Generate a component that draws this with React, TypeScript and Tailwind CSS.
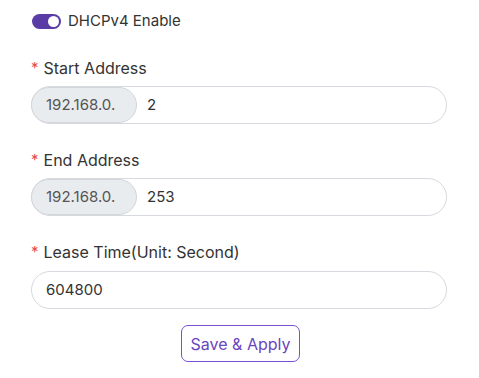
import React from 'react';

const Label: React.FC<{ text: string }> = ({ text }) => (
  <div className="flex items-center h-[22px] text-[16px] text-[#333]">
    <span className="text-[#e5484d] mr-[5px] text-[15px]">*</span>
    {text}
  </div>
);

const AddonInput: React.FC<{ prefix: string; value: string }> = ({ prefix, value }) => (
  <div className="flex items-center h-[38px] w-[416px] rounded-full border border-[#d6d9de] bg-white">
    <div className="flex items-center h-full w-[106px] -ml-px pl-[14px] rounded-full border border-[#d3d6db] bg-[#e9ecef] text-[#555] text-[15px]">
      {prefix}
    </div>
    <span className="pl-[10px] text-[15px] text-[#333]">{value}</span>
  </div>
);

export default function App() {
  return (
    <div className="w-[479px] h-[378px] bg-white px-[31px] pt-[13px]" style={{ fontFamily: 'Inter, "Noto Sans", sans-serif' }}>
      {/* Enable switch */}
      <div className="flex items-center gap-[7px] h-[17px]">
        <div className="flex items-center justify-end w-[29px] h-[15px] ml-px rounded-full bg-[#5a3ca6] pr-[2px]">
          <div className="w-[11px] h-[11px] rounded-full bg-white" />
        </div>
        <span className="text-[15px] text-[#333]">DHCPv4 Enable</span>
      </div>

      <div className="mt-[27px]">
        <Label text="Start Address" />
        <div className="mt-[7px]">
          <AddonInput prefix="192.168.0." value="2" />
        </div>
      </div>

      <div className="mt-[25px]">
        <Label text="End Address" />
        <div className="mt-[7px]">
          <AddonInput prefix="192.168.0." value="253" />
        </div>
      </div>

      <div className="mt-[25px]">
        <Label text="Lease Time(Unit: Second)" />
        <div className="mt-[8px] flex items-center h-[38px] w-[416px] rounded-full border border-[#d6d9de] pl-[14px] text-[15px] text-[#333]">
          604800
        </div>
      </div>

      <div className="flex justify-center mt-[16px]">
        <button className="h-[37px] w-[119px] ml-[2px] rounded-[7px] border border-[#7a4fd0] text-[#6a45c0] text-[16px] bg-white">
          Save &amp; Apply
        </button>
      </div>
    </div>
  );
}
